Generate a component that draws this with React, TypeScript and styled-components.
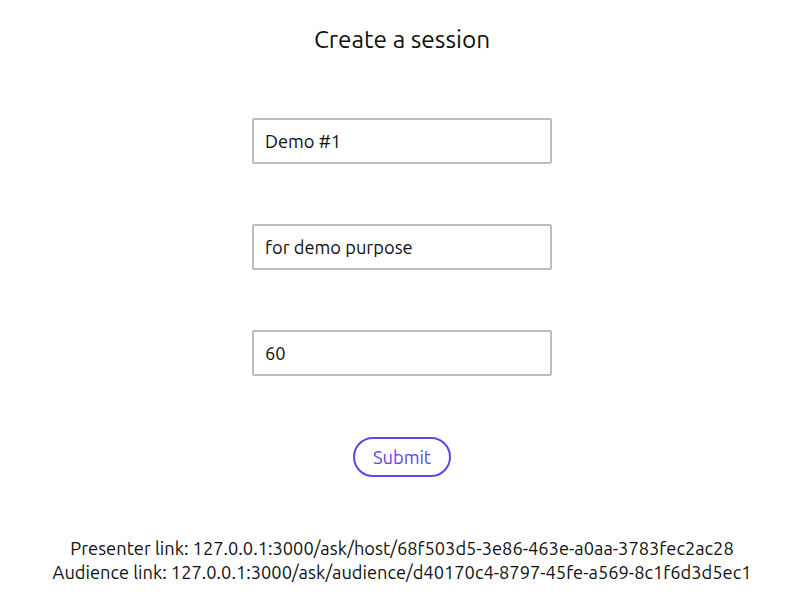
import React, { useState } from "react";
import styled, { createGlobalStyle } from "styled-components";

const GlobalStyle = createGlobalStyle`
  body {
    margin: 0;
    background: #fff;
    color: #111;
    font-family: "Ubuntu", "Liberation Sans", sans-serif;
  }
`;

const Page = styled.div`
  width: 804px;
  display: flex;
  flex-direction: column;
  align-items: center;
`;

const Title = styled.h1`
  margin: 25px 0 0;
  font-size: 24.4px;
  font-weight: 400;
  line-height: 28px;
`;

const Form = styled.form`
  display: flex;
  flex-direction: column;
  align-items: center;
  gap: 60px;
  margin-top: 65px;
`;

const Input = styled.input`
  box-sizing: border-box;
  width: 300px;
  height: 46px;
  padding: 0 11px;
  border: 2px solid #bdbdbd;
  border-radius: 2px;
  font-family: inherit;
  font-size: 18.3px;
  color: #111;
  outline: none;
`;

const SubmitButton = styled.button`
  margin-top: 1px;
  width: 98px;
  height: 40px;
  border: 2px solid #5a47f0;
  border-radius: 20px;
  background: #fff;
  color: #5a47f0;
  font-family: inherit;
  font-size: 18.3px;
  cursor: pointer;
`;

const Links = styled.div`
  margin-top: 59px;
  text-align: center;
  font-size: 18.3px;
  line-height: 24px;
`;

const App: React.FC = () => {
  const [name, setName] = useState("Demo #1");
  const [description, setDescription] = useState("for demo purpose");
  const [duration, setDuration] = useState("60");

  return (
    <Page>
      <GlobalStyle />
      <Title>Create a session</Title>
      <Form onSubmit={(e) => e.preventDefault()}>
        <Input value={name} onChange={(e) => setName(e.target.value)} />
        <Input
          value={description}
          onChange={(e) => setDescription(e.target.value)}
        />
        <Input value={duration} onChange={(e) => setDuration(e.target.value)} />
        <SubmitButton type="submit">Submit</SubmitButton>
      </Form>
      <Links>
        <div>
          Presenter link:
          127.0.0.1:3000/ask/host/68f503d5-3e86-463e-a0aa-3783fec2ac28
        </div>
        <div>
          Audience link:
          127.0.0.1:3000/ask/audience/d40170c4-8797-45fe-a569-8c1f6d3d5ec1
        </div>
      </Links>
    </Page>
  );
};

export default App;
